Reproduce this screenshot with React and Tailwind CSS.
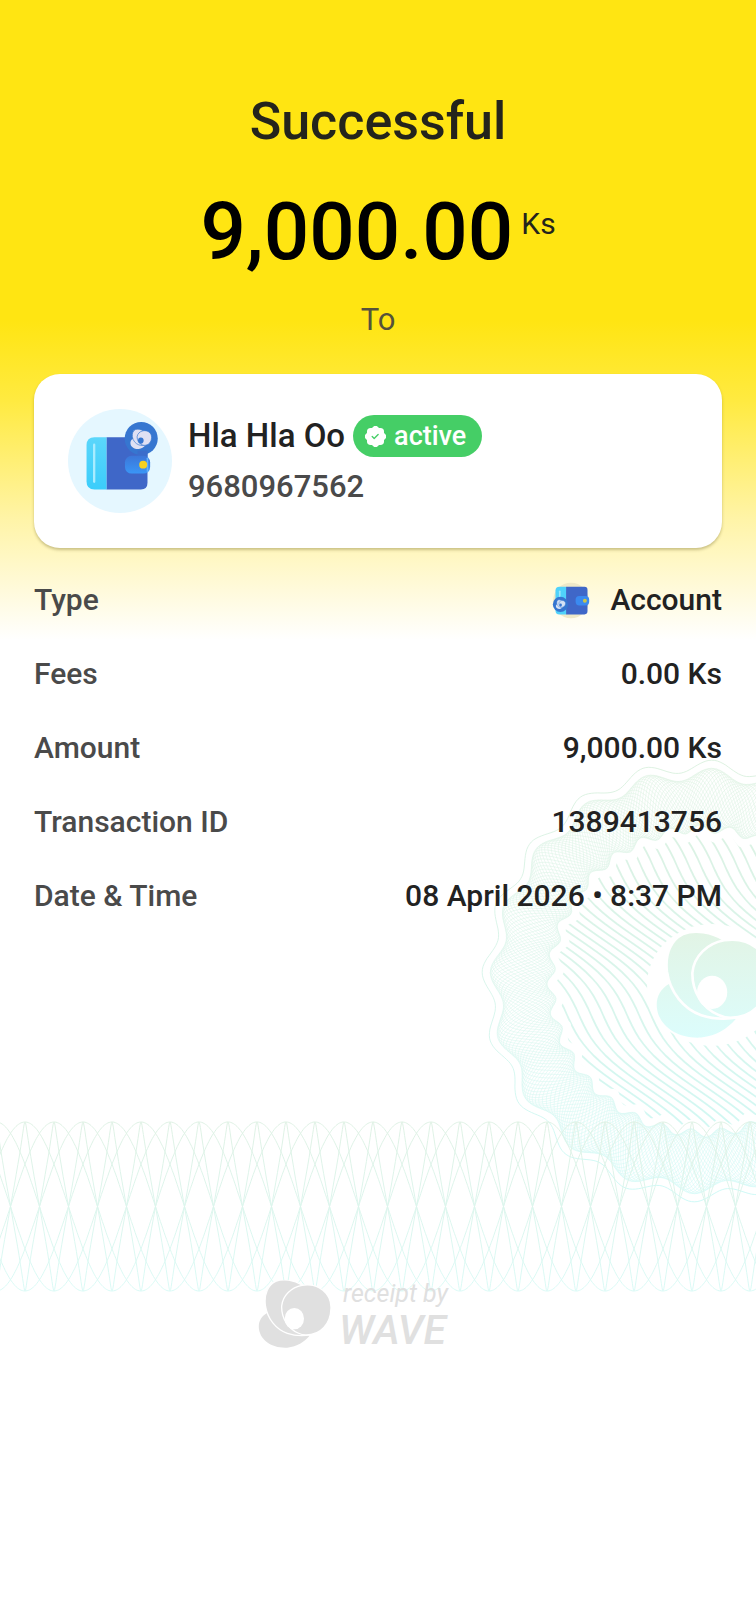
import React from "react";
import { BsPatchCheckFill } from "react-icons/bs";

const range = (n) => Array.from({ length: n }, (_, i) => i);

/* ---------- brand swirl, drawn in a 217 x 204 box ---------- */
function Swirl({ fill, gap, gapWidth = 4 }) {
  return (
    <g transform="translate(-53 -58)">
      <path d="M78 158C60 168 52 186 55 206C60 240 96 264 140 261C170 258 190 244 206 226L180 160Z" fill={fill} />
      <path
        d="M184 73C160 58 128 53 105 62C82 73 70 100 74 134C80 174 106 206 140 218C164 226 190 226 212 222L240 140Z"
        fill={fill}
        stroke={gap}
        strokeWidth={gapWidth}
      />
      <path
        d="M184 74C234 66 272 98 271 142C270 190 240 223 196 223C188 223 180 221 172 217C142 204 122 172 123 136C126 104 152 80 184 74Z"
        fill={fill}
        stroke={gap}
        strokeWidth={gapWidth}
      />
      <ellipse cx="161" cy="174" rx="29" ry="32" fill={gap} />
    </g>
  );
}

/* ---------- guilloche rosette ---------- */
const CX = 225;
const CY = 225;
const outer = (a) => 207 + 6 * Math.cos(20 * (a + 1.527));
const inner = (a) => 152 + 4 * Math.cos(32 * (a + 0.02));

function polar(fn, steps = 480) {
  return (
    range(steps)
      .map((i) => {
        const a = (i / steps) * Math.PI * 2;
        const r = fn(a);
        return `${i ? "L" : "M"}${(CX + r * Math.cos(a)).toFixed(1)} ${(CY + r * Math.sin(a)).toFixed(1)}`;
      })
      .join("") + "Z"
  );
}

const MESH = range(28).map((k) =>
  polar((a) => {
    const lo = inner(a);
    const hi = outer(a);
    return lo + (hi - lo) * (0.5 + 0.5 * Math.sin(12 * a + (k / 28) * Math.PI * 2));
  })
);
const RIM = polar((a) => outer(a) + 8);
const CORE = polar((a) => inner(a) - 9);

const STRIPES = range(56).map((k) => {
  const x0 = -280 + k * 12;
  return range(60)
    .map((i) => {
      const y = 60 + i * 6;
      const x = x0 + 0.95 * (y - 60) + 12 * Math.sin((2 * Math.PI * (y - 184)) / 150);
      return `${i ? "L" : "M"}${x.toFixed(1)} ${y}`;
    })
    .join("");
});

function Rosette() {
  return (
    <svg viewBox="0 0 450 450" className="block size-[450px]" aria-hidden="true">
      <defs>
        <linearGradient id="mint" gradientUnits="userSpaceOnUse" x1="0" y1="0" x2="0" y2="450">
          <stop offset="0" stopColor="#d5eed9" />
          <stop offset="0.55" stopColor="#d0f3e8" />
          <stop offset="1" stopColor="#c2f8f5" />
        </linearGradient>
        <linearGradient id="petal" gradientUnits="userSpaceOnUse" x1="0" y1="58" x2="0" y2="262">
          <stop offset="0" stopColor="#e2f4e5" />
          <stop offset="1" stopColor="#dcfdfc" />
        </linearGradient>
        <mask id="core">
          <path d={CORE} fill="#fff" />
          <ellipse cx="234" cy="229" rx="65" ry="61" fill="#000" />
        </mask>
      </defs>
      <path d={RIM} fill="none" stroke="url(#mint)" strokeWidth="1" opacity="0.8" />
      <g fill="none" stroke="url(#mint)" strokeWidth="0.6" opacity="0.75">
        {MESH.map((d, i) => (
          <path key={i} d={d} />
        ))}
      </g>
      <g mask="url(#core)" fill="none" stroke="url(#mint)" strokeWidth="1.8" opacity="0.8">
        {STRIPES.map((d, i) => (
          <path key={i} d={d} />
        ))}
      </g>
      <g transform="translate(178 176) scale(0.52)">
        <Swirl fill="url(#petal)" gap="#ffffff" gapWidth={5} />
      </g>
    </svg>
  );
}

/* ---------- interlaced band ---------- */
const wave = (shift, period, bulge) =>
  range(900)
    .map((i) => {
      const p = (i / 900) * ((1100 / period) * Math.PI * 2);
      const x = shift + (period * p) / (2 * Math.PI) + bulge * Math.sin(2 * p);
      const y = 85.5 - 84.5 * Math.cos(p);
      return `${i ? "L" : "M"}${x.toFixed(1)} ${y.toFixed(1)}`;
    })
    .join("");
const BAND = [
  ...range(6).map((k) => wave(-149 + k * 29, 174, 0)),
  ...range(2).map((k) => wave(-91 + k * 29, 58, -3)),
];

function Band() {
  return (
    <svg viewBox="0 0 756 171" preserveAspectRatio="none" className="block h-[171px] w-full" aria-hidden="true">
      <defs>
        <linearGradient id="band" gradientUnits="userSpaceOnUse" x1="0" y1="0" x2="0" y2="171">
          <stop offset="0" stopColor="#dff1e4" />
          <stop offset="1" stopColor="#dafaf6" />
        </linearGradient>
      </defs>
      <g fill="none" stroke="url(#band)" strokeWidth="1">
        {BAND.map((d, i) => (
          <path key={i} d={d} />
        ))}
      </g>
    </svg>
  );
}

/* ---------- wallet icons ---------- */
function WalletAvatar() {
  return (
    <svg viewBox="52 54 314 314" className="size-[104px] shrink-0" aria-hidden="true">
      <defs>
        <linearGradient id="flap" x1="0" y1="0" x2="0" y2="1">
          <stop offset="0" stopColor="#5bd6fb" />
          <stop offset="1" stopColor="#3bcdfb" />
        </linearGradient>
        <linearGradient id="clasp" x1="0" y1="0" x2="0" y2="1">
          <stop offset="0" stopColor="#3c76d8" />
          <stop offset="1" stopColor="#3a96f6" />
        </linearGradient>
      </defs>
      <circle cx="209" cy="211" r="157" fill="#e5f7ff" />
      <path d="M168 139H272Q292 139 292 159V277Q292 297 272 297H168Z" fill="#3f67c8" />
      <path d="M168 139H132Q108 139 108 163V273Q108 297 132 297H168Z" fill="url(#flap)" />
      <path d="M131 162V274" stroke="#a9ecff" strokeWidth="7" strokeLinecap="round" />
      <circle cx="273" cy="143" r="50" fill="#3676d0" />
      <path d="M262 180H292V215H262Z" fill="#3b6dcb" />
      <g transform="translate(240 115) scale(0.295)">
        <Swirl fill="#dfe0f3" gap="#3676d0" gapWidth={7} />
      </g>
      <rect x="224" y="195" width="76" height="54" rx="20" fill="url(#clasp)" />
      <path d="M292 203V242" stroke="#62b1fa" strokeWidth="5" strokeLinecap="round" />
      <circle cx="279" cy="222" r="12" fill="#f5d020" />
    </svg>
  );
}

function WalletMini() {
  return (
    <svg viewBox="62 62 114 112" className="h-[37px] w-[38px] shrink-0" aria-hidden="true">
      <circle cx="119" cy="118" r="54" fill="#efe9c8" />
      <path d="M104 76H160Q169 76 169 86V150Q169 160 160 160H104Z" fill="#3f67c8" />
      <path d="M104 76H84Q72 76 72 88V148Q72 160 84 160H104Z" fill="#4fd2fb" />
      <path d="M85 90V108" stroke="#9be7fd" strokeWidth="5" strokeLinecap="round" />
      <circle cx="87" cy="130" r="23" fill="#3676d0" />
      <g transform="translate(73 116) scale(0.135)">
        <Swirl fill="#d5e2f5" gap="#3676d0" gapWidth={10} />
      </g>
      <rect x="133" y="104" width="41" height="29" rx="11" fill="#3a8af0" />
      <circle cx="161" cy="119" r="6" fill="#c9c64a" />
    </svg>
  );
}

const DETAILS = [
  { label: "Type", value: "Account", icon: true },
  { label: "Fees", value: "0.00 Ks" },
  { label: "Amount", value: "9,000.00 Ks" },
  { label: "Transaction ID", value: "1389413756" },
  { label: "Date & Time", value: "08 April 2026 • 8:37 PM" },
];

export default function App() {
  return (
    <main className="relative isolate min-h-screen overflow-hidden bg-white bg-[linear-gradient(to_bottom,#ffe512_0px,#ffe512_320px,#ffea40_400px,#fff4a8_520px,#fffadb_590px,#ffffff_640px)] font-[Roboto,'Noto_Sans',sans-serif] font-medium text-[#222222]">
      <div className="pointer-events-none absolute -right-[172px] top-[756px] -z-10">
        <Rosette />
      </div>

      <div className="flex flex-col px-[34px] pt-[90px]">
        <header className="flex flex-col items-center">
          <h1 className="text-[52px] leading-[64px] text-[#24241c]">Successful</h1>
          <p className="mt-[30px] flex items-start gap-2 text-black">
            <span className="text-[80px] leading-[96px]">9,000.00</span>
            <span className="pt-5 text-[30px] leading-10 font-normal text-[#24241c]">Ks</span>
          </p>
          <p className="mt-5 text-[31px] leading-10 font-normal text-[#55523a]">To</p>
        </header>

        <section className="mt-[34px] flex items-center gap-4 rounded-[26px] bg-white px-[34px] py-[35px] shadow-[0_2px_3px_rgba(80,70,0,0.3)]">
          <WalletAvatar />
          <div className="flex flex-col gap-2.5">
            <div className="flex items-center gap-2">
              <h2 className="text-[33px] leading-[42px]">Hla Hla Oo</h2>
              <span className="flex h-[42px] items-center gap-2 rounded-full bg-[#45ce66] px-3 pr-4 text-[27px] text-white">
                <BsPatchCheckFill className="size-[21px]" aria-hidden="true" />
                active
              </span>
            </div>
            <p className="text-[31px] leading-10 text-[#4a4a4a]">9680967562</p>
          </div>
        </section>

        <dl className="mt-8 flex flex-col gap-[34px] text-[30px] leading-10">
          {DETAILS.map((row) => (
            <div key={row.label} className="flex items-center justify-between">
              <dt className="text-[#4a4a4a]">{row.label}</dt>
              <dd className="flex items-center gap-5">
                {row.icon && <WalletMini />}
                {row.value}
              </dd>
            </div>
          ))}
        </dl>
      </div>

      <div className="mt-[205px]">
        <Band />
      </div>

      <footer className="-mt-3 flex items-start justify-center gap-2 pb-8 pr-[50px] text-[#e0e0e0]">
        <svg viewBox="0 0 217 204" className="h-[68px] w-[73px]" aria-hidden="true">
          <Swirl fill="#e0e0e0" gap="#ffffff" />
        </svg>
        <p className="flex flex-col italic">
          <span className="pl-1 text-[25px] leading-7 font-normal">receipt by</span>
          <span className="text-[41px] leading-[44px]">WAVE</span>
        </p>
      </footer>
    </main>
  );
}
